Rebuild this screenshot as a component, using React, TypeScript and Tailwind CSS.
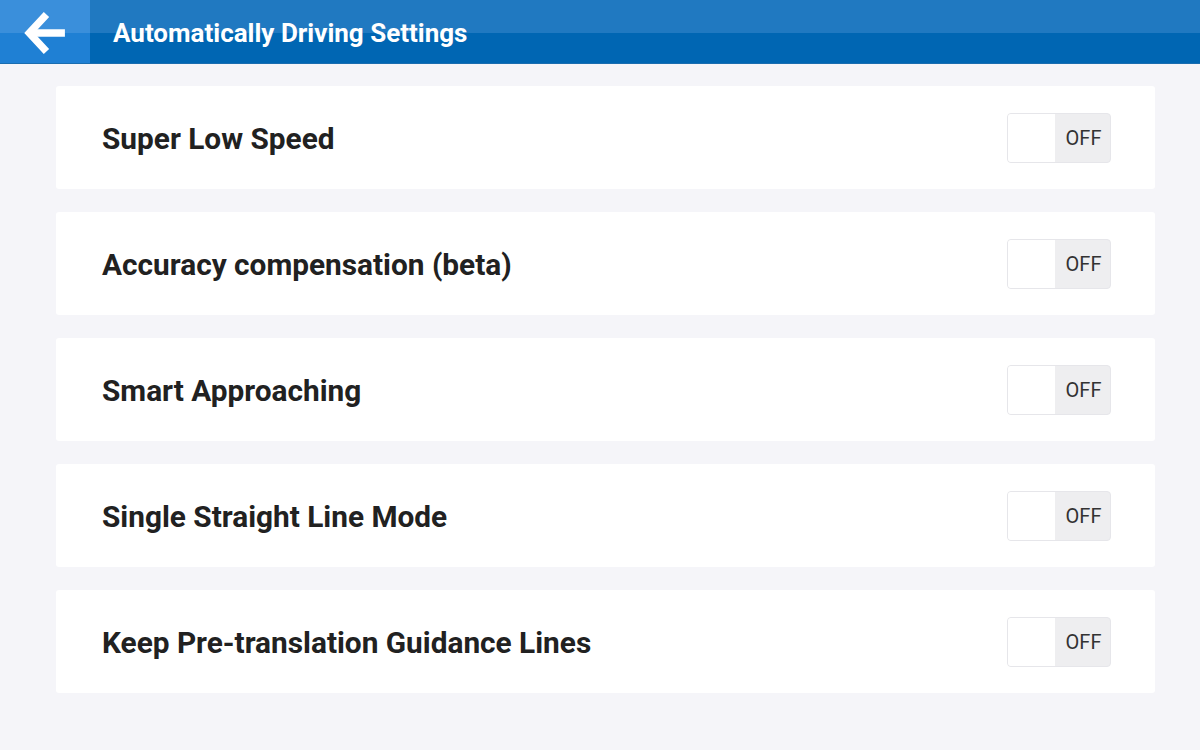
import React from 'react';

const items = [
  'Super Low Speed',
  'Accuracy compensation (beta)',
  'Smart Approaching',
  'Single Straight Line Mode',
  'Keep Pre-translation Guidance Lines',
];

function OffSwitch() {
  return (
    <div className="flex h-[50px] w-[104px] overflow-hidden rounded-[4px] border border-[#e6e6ea] bg-[#eeeef0]">
      <div className="w-[47px] bg-white" />
      <div className="flex flex-1 items-center justify-center pl-[2px] pt-[1px] text-[20px] text-[#333]">OFF</div>
    </div>
  );
}

export default function App() {
  return (
    <div
      className="flex h-[750px] w-[1200px] flex-col bg-[#f5f5f9]"
      style={{ fontFamily: 'Roboto, "Liberation Sans", sans-serif' }}
    >
      {/* Header */}
      <div className="relative flex h-[64px] shrink-0 items-stretch border-b border-[#1a6db0] bg-[linear-gradient(to_bottom,#2079c1_0,#2079c1_52%,#0066b3_52%,#0066b3_100%)]">
        <button className="flex w-[90px] items-center justify-center bg-[linear-gradient(to_bottom,#3a8fdb_0,#3a8fdb_52%,#1f80d4_52%,#1f80d4_100%)]">
          <svg width="44" height="44" viewBox="0 0 42 42" fill="none" className="mt-[2px]">
            <path d="M20 6 L6 21 L20 36" stroke="white" strokeWidth="7" strokeLinecap="square" strokeLinejoin="miter" />
            <path d="M9 21 H40" stroke="white" strokeWidth="7" />
          </svg>
        </button>
        <div className="flex items-center pl-[23px] pt-[3px] text-[26px] font-bold text-white">
          Automatically Driving Settings
        </div>
      </div>

      {/* List */}
      <div className="flex flex-col gap-[23px] pl-[56px] pr-[45px] pt-[22px]">
        {items.map(label => (
          <div
            key={label}
            className="flex h-[103px] items-center justify-between rounded-[3px] bg-white pl-[46px] pr-[44px]"
          >
            <span className="pt-[3px] text-[29.8px] font-bold text-[#212121]">{label}</span>
            <OffSwitch />
          </div>
        ))}
      </div>
    </div>
  );
}
